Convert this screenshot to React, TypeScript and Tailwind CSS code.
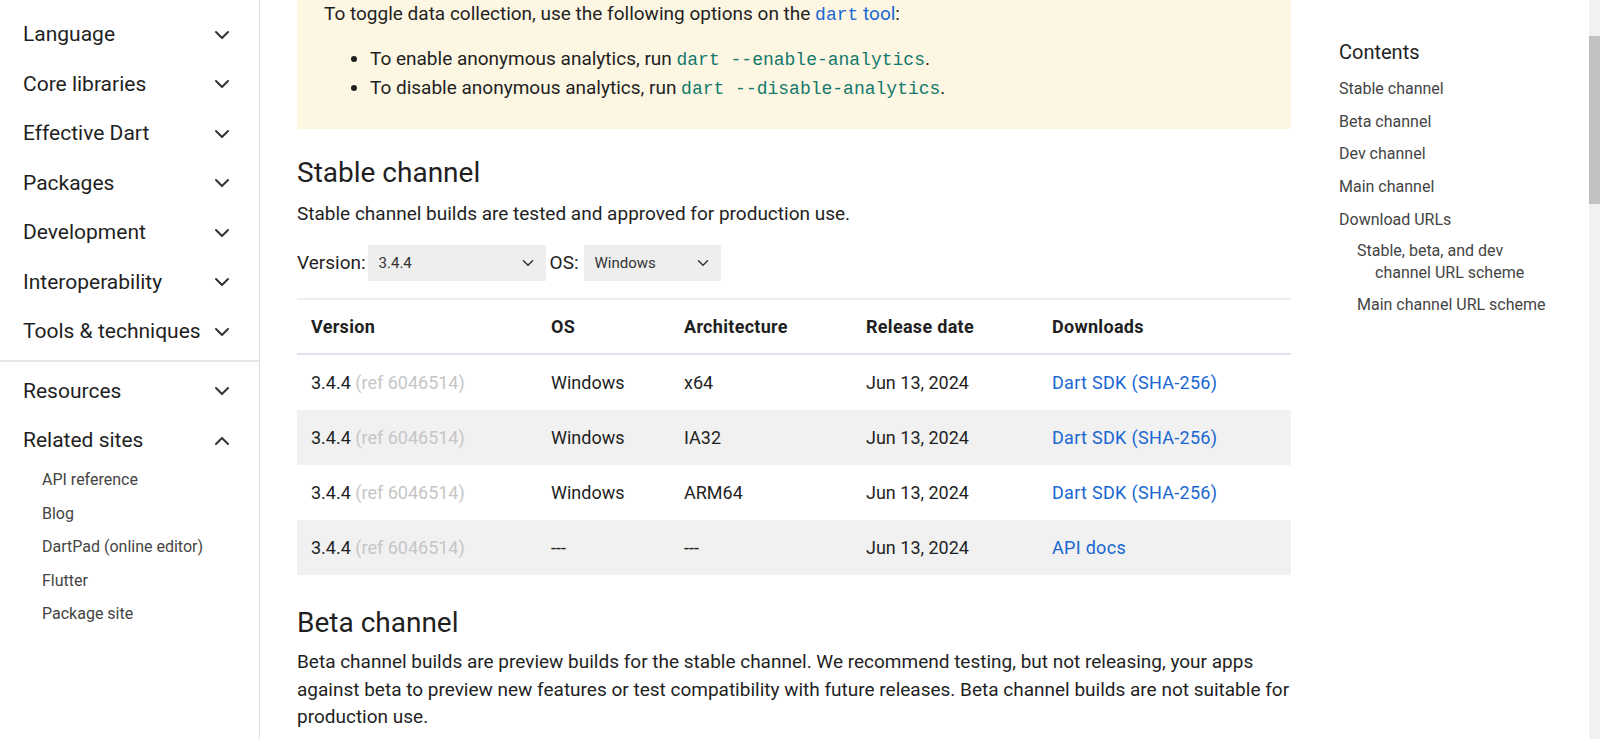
import React from 'react';
import { ChevronDown, ChevronUp } from 'lucide-react';

const navGroups = [
  'Language',
  'Core libraries',
  'Effective Dart',
  'Packages',
  'Development',
  'Interoperability',
  'Tools & techniques',
];

const relatedSites = ['API reference', 'Blog', 'DartPad (online editor)', 'Flutter', 'Package site'];

const rows = [
  { os: 'Windows', arch: 'x64', link: 'Dart SDK (SHA-256)' },
  { os: 'Windows', arch: 'IA32', link: 'Dart SDK (SHA-256)' },
  { os: 'Windows', arch: 'ARM64', link: 'Dart SDK (SHA-256)' },
  { os: '---', arch: '---', link: 'API docs' },
];

const NavItem: React.FC<{ label: string; open?: boolean }> = ({ label, open }) => (
  <div className="flex items-center justify-between h-[49.5px] pl-[23px] pr-[25px] text-[21px] text-[#1f1f1f]">
    <span>{label}</span>
    {open ? (
      <ChevronUp size={24} strokeWidth={2} className="text-[#333]" />
    ) : (
      <ChevronDown size={24} strokeWidth={2} className="text-[#333]" />
    )}
  </div>
);

const Select: React.FC<{ value: string; width: string }> = ({ value, width }) => (
  <div className={`flex items-center justify-between h-[36px] bg-[#eeeeee] pl-[11px] pr-[9px] text-[15px] text-[#333] ${width}`}>
    <span>{value}</span>
    <ChevronDown size={18} strokeWidth={2} className="text-[#333]" />
  </div>
);

const Sidebar: React.FC = () => (
  <aside className="w-[260px] shrink-0 h-full border-r border-[#e0e0e0] pt-[10px]">
    <div className="pb-[3px] border-b-2 border-[#e6e6e6]">
      {navGroups.map((g) => (
        <NavItem key={g} label={g} />
      ))}
    </div>
    <div className="pt-[5px]">
      <NavItem label="Resources" />
      <NavItem label="Related sites" open />
      <div className="flex flex-col -mt-[2px]">
        {relatedSites.map((s) => (
          <div key={s} className="pl-[42px] h-[33.5px] flex items-center text-[16px] text-[#444]">
            {s}
          </div>
        ))}
      </div>
    </div>
  </aside>
);

const Code: React.FC<{ children: React.ReactNode; className?: string }> = ({ children, className }) => (
  <code className={`font-['Liberation_Mono',monospace] text-[18px] leading-none ${className ?? 'text-[#13796b]'}`}>
    {children}
  </code>
);

const DownloadsTable: React.FC = () => (
  <div className="mt-[17px] border-t-2 border-[#eeeeee]">
    <div className="grid grid-cols-[240px_133px_182px_186px_1fr] h-[55px] items-center border-b-2 border-[#dde3ea] font-bold tracking-[0.3px] text-[18px] text-[#1f1f1f]">
      <div className="pl-[14px]">Version</div>
      <div className="pl-[14px]">OS</div>
      <div className="pl-[14px]">Architecture</div>
      <div className="pl-[14px]">Release date</div>
      <div className="pl-[14px]">Downloads</div>
    </div>
    {rows.map((r, i) => (
      <div
        key={i}
        className={`grid grid-cols-[240px_133px_182px_186px_1fr] h-[55px] items-center text-[18px] text-[#1f1f1f] ${
          i % 2 === 1 ? 'bg-[#f1f1f1]' : 'bg-white'
        }`}
      >
        <div className="pl-[14px]">
          3.4.4 <span className="text-[#c6c6c6]">(ref 6046514)</span>
        </div>
        <div className="pl-[14px]">{r.os}</div>
        <div className="pl-[14px]">{r.arch}</div>
        <div className="pl-[14px]">Jun 13, 2024</div>
        <div className="pl-[14px] text-[#1967d2] tracking-[0.3px]">{r.link}</div>
      </div>
    ))}
  </div>
);

const Article: React.FC = () => (
  <article className="w-[994px] shrink-0 ml-[37px] text-[19px] text-[#1f1f1f]">
    <div className="bg-[#fcf6e2] pl-[27px] pr-[24px] pb-[27px]">
      <p className="leading-[28px]">
        To toggle data collection, use the following options on the{' '}
        <span className="text-[#1967d2]">
          <Code className="text-[#1967d2]">dart</Code> tool
        </span>
        :
      </p>
      <ul className="mt-[16px] pl-[46px] list-disc leading-[29px] marker:text-[#1f1f1f]">
        <li>
          To enable anonymous analytics, run <Code>dart --enable-analytics</Code>.
        </li>
        <li>
          To disable anonymous analytics, run <Code>dart --disable-analytics</Code>.
        </li>
      </ul>
    </div>

    <h2 className="mt-[26px] text-[28px] leading-[36px] font-normal">Stable channel</h2>
    <p className="mt-[9px] leading-[28px]">Stable channel builds are tested and approved for production use.</p>

    <div className="mt-[17px] flex items-center">
      <span className="mr-[2px]">Version:</span>
      <Select value="3.4.4" width="w-[178px]" />
      <span className="ml-[4px] mr-[5px]">OS:</span>
      <Select value="Windows" width="w-[137px]" />
    </div>

    <DownloadsTable />

    <h2 className="mt-[30px] text-[28px] leading-[36px] font-normal">Beta channel</h2>
    <p className="mt-[7px] leading-[27.5px]">
      Beta channel builds are preview builds for the stable channel. We recommend testing, but not releasing, your apps
      against beta to preview new features or test compatibility with future releases. Beta channel builds are not
      suitable for production use.
    </p>
  </article>
);

const Toc: React.FC = () => (
  <nav className="ml-[48px] w-[222px] shrink-0 pt-[38px] text-[#444]">
    <div className="text-[20px] leading-[28px] text-[#1f1f1f]">Contents</div>
    <ul className="mt-[7px] text-[16px]">
      {['Stable channel', 'Beta channel', 'Dev channel', 'Main channel', 'Download URLs'].map((t) => (
        <li key={t} className="h-[32.6px] flex items-center">
          {t}
        </li>
      ))}
    </ul>
    <ul className="text-[16px] leading-[22px] pl-[36px]">
      <li className="-indent-[18px] mt-[4px]">Stable, beta, and dev channel URL scheme</li>
      <li className="-indent-[18px] mt-[10px]">Main channel URL scheme</li>
    </ul>
  </nav>
);

export default function App() {
  return (
    <div className="h-screen w-screen overflow-hidden bg-white flex font-['Roboto',sans-serif] relative">
      <Sidebar />
      <main className="flex-1 flex items-start">
        <Article />
        <Toc />
      </main>
      {/* fake browser scrollbar */}
      <div className="absolute right-0 top-0 h-full w-[11px] bg-[#f1f1f1]">
        <div className="mt-[36px] h-[168px] w-full bg-[#c1c1c1]" />
      </div>
    </div>
  );
}
